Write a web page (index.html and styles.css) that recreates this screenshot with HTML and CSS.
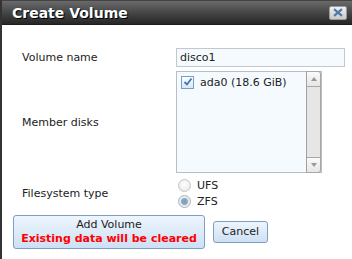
FILE: index.html
```html
<!DOCTYPE html>
<html>
<head>
    <meta charset="utf-8"/>
    <title>Create Volume</title>
    <link rel="stylesheet" href="styles.css">
</head>
<body>
<div class="dialog">
    <div class="titlebar">
        <span class="title">Create Volume</span>
        <span class="close">
            <svg width="18" height="13" viewBox="0 0 18 13">
                <path d="M5.5 3.5 L12.5 9.5 M12.5 3.5 L5.5 9.5" stroke="#4f79a8" stroke-width="2.4" stroke-linecap="square"/>
            </svg>
        </span>
    </div>
    <div class="content">
        <div class="form">
            <label class="label">Volume name</label>
            <div class="field"><input class="text" type="text" value="disco1"></div>

            <label class="label">Member disks</label>
            <div class="field">
                <div class="listbox">
                    <div class="items">
                        <div class="item">
                            <span class="check">
                                <svg width="10" height="10" viewBox="0 0 10 10">
                                    <path d="M1.5 5 L4 7.5 L8.5 1.5" fill="none" stroke="#3c78b4" stroke-width="1.8"/>
                                </svg>
                            </span>
                            ada0 (18.6 GiB)
                        </div>
                    </div>
                    <div class="scrollbar">
                        <div class="sbtn up"><span class="tri"></span></div>
                        <div class="track"></div>
                        <div class="sbtn down"><span class="tri"></span></div>
                    </div>
                </div>
            </div>

            <label class="label">Filesystem type</label>
            <div class="field radios">
                <div class="radio"><span class="dot"></span>UFS</div>
                <div class="radio"><span class="dot on"></span>ZFS</div>
            </div>
        </div>
        <div class="buttons">
            <button class="btn add">Add Volume<br><span class="warn">Existing data will be cleared</span></button>
            <button class="btn cancel">Cancel</button>
        </div>
    </div>
</div>
</body>
</html>
```

FILE: styles.css
```css
* {
    margin: 0;
    padding: 0;
    box-sizing: border-box;
}

body {
    font-family: "DejaVu Sans", Verdana, sans-serif;
    font-size: 11px;
    color: #222;
    background: #fff;
    width: 352px;
    height: 259px;
    overflow: hidden;
}

.dialog {
    border-left: 2px solid #333;
    height: 259px;
}

.titlebar {
    height: 25px;
    background: linear-gradient(#6a6a6a, #4a4a4a 45%, #262626);
    border-top: 1px solid #444;
    border-bottom: 1px solid #1c1c1c;
    display: flex;
    align-items: center;
    justify-content: space-between;
    padding: 0 5px 0 10px;
}

.title {
    color: #fff;
    font-weight: bold;
    font-size: 14px;
    text-shadow: 1px 1px 0 #000, 0 0 1px #204060;
}

.close {
    width: 18px;
    height: 14px;
    border-radius: 2px;
    background: linear-gradient(#f0f0f0, #c8c8c8);
    border: 1px solid #9a9a9a;
    display: flex;
    align-items: center;
    justify-content: center;
}

.close svg {
    display: block;
}

.content {
    padding: 23px 0 0 20px;
}

.form {
    display: grid;
    grid-template-columns: 154px 169px;
    row-gap: 4px;
    align-items: center;
}

.text {
    width: 169px;
    height: 19px;
    border: 1px solid #c2c8d0;
    background: #f5faff;
    font-family: inherit;
    font-size: 11px;
    color: #222;
    padding: 0 3px;
    outline: none;
}

.listbox {
    width: 146px;
    height: 102px;
    border: 1px solid #b8bec6;
    background: #f5faff;
    display: flex;
}

.items {
    flex: 1;
    padding: 3px 0 0 4px;
}

.item {
    display: flex;
    align-items: center;
    gap: 6px;
    height: 14px;
}

.check {
    width: 13px;
    height: 13px;
    border: 1px solid #7c9cc0;
    background: linear-gradient(#ffffff, #d8e6f4);
    display: flex;
    align-items: center;
    justify-content: center;
}

.scrollbar {
    width: 15px;
    display: flex;
    flex-direction: column;
    border-left: 1px solid #a0a0a0;
    margin: -1px 0;
}

.sbtn {
    height: 16px;
    background: linear-gradient(#fafafa, #e6e6e6);
    border: 1px solid #a8a8a8;
    border-left: none;
    border-radius: 0 3px 0 0;
    display: flex;
    align-items: center;
    justify-content: center;
}

.sbtn.down {
    border-radius: 0 0 3px 0;
}

.tri {
    width: 0;
    height: 0;
    border-left: 3px solid transparent;
    border-right: 3px solid transparent;
    border-bottom: 4px solid #999;
}

.down .tri {
    border-bottom: none;
    border-top: 4px solid #999;
}

.track {
    flex: 1;
    background: #e6e6e6;
    border-right: 1px solid #a8a8a8;
}

.radio {
    display: flex;
    align-items: center;
    gap: 6px;
    height: 16px;
    padding-left: 2px;
}

.dot {
    width: 13px;
    height: 13px;
    border-radius: 50%;
    border: 1px solid #c4c4c4;
    background: radial-gradient(circle at 50% 40%, #ffffff, #e4e4e4);
}

.dot.on {
    border-color: #aab2bc;
    background: radial-gradient(circle, #7b9cbc 0, #90aac4 3px, #e2e8ee 4px, #f2f4f6 6px);
}

.buttons {
    display: flex;
    align-items: center;
    gap: 8px;
    padding-top: 6px;
    margin-left: -9px;
}

.btn {
    font-family: inherit;
    font-size: 11px;
    color: #222;
    background: linear-gradient(#eef5fd, #cde0f4);
    border: 1px solid #7d9dc2;
    border-radius: 3px;
    line-height: 14px;
}

.add {
    width: 192px;
    height: 34px;
}

.warn {
    color: #f00;
    font-weight: bold;
}

.cancel {
    width: 55px;
    height: 22px;
}
```
